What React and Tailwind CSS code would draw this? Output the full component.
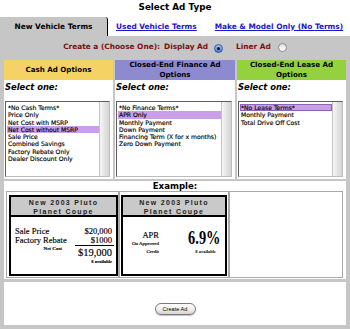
import clsx from 'clsx'

const cashItems = [
  '*No Cash Terms*',
  'Price Only',
  'Net Cost with MSRP',
  'Net Cost without MSRP',
  'Sale Price',
  'Combined Savings',
  'Factory Rebate Only',
  'Dealer Discount Only',
]
const financeItems = [
  '*No Finance Terms*',
  'APR Only',
  'Monthly Payment',
  'Down Payment',
  'Financing Term (X for x months)',
  'Zero Down Payment',
]
const leaseItems = ['*No Lease Terms*', 'Monthly Payment', 'Total Drive Off Cost']

function Radio({ checked }) {
  return checked ? (
    <span className="inline-flex h-[9px] w-[9px] items-center justify-center rounded-full border border-[#32579a] bg-gradient-to-b from-[#a9c8f0] to-[#3d7bd4]">
      <span className="h-[3px] w-[3px] rounded-full bg-[#0b1730]" />
    </span>
  ) : (
    <span className="inline-block h-[9px] w-[9px] rounded-full border border-[#8c8c8c] bg-gradient-to-b from-[#dedede] to-white" />
  )
}

function ListBox({ items, selected, focused }) {
  return (
    <div className="mt-[8px] flex h-[76px] border border-t-[#5e5e5e] border-l-[#5e5e5e] border-r-[#bdbdbd] border-b-[#bdbdbd] bg-white">
      <div className="flex-1 overflow-hidden pt-[2px] pl-[1px]">
        {items.map((it, i) => (
          <div
            key={it}
            className={clsx(
              'h-[7.3px] whitespace-nowrap pl-[1px] text-[6.1px] leading-[7.3px] [-webkit-text-stroke:0.15px_black]',
              i === selected && 'bg-[#c99fe7]',
              i === selected && focused && 'outline outline-1 -outline-offset-1 outline-[#8e62b8]'
            )}
          >
            {it}
          </div>
        ))}
      </div>
      <div className="w-[10px] border-l border-[#c4c4c4] bg-gradient-to-r from-[#f6f6f6] to-[#d4d4d4]" />
    </div>
  )
}

function Column({ title, color, width, items, selected, focused }) {
  return (
    <div className={clsx('flex flex-col', width)}>
      <div className={clsx('flex h-[20px] items-center justify-center text-center text-[7.1px] font-bold leading-[10px]', color)}>
        {title}
      </div>
      <div className="flex-1 bg-white pt-[2px] pr-[3px] pl-[1px]">
        <div className="text-[8.4px] font-bold italic leading-[11px]">Select one:</div>
        <ListBox items={items} selected={selected} focused={focused} />
      </div>
    </div>
  )
}

function CarBox({ children }) {
  return (
    <div className="flex h-[81px] flex-col border-2 border-black bg-white">
      <div className="h-[20px] border-b-2 border-black bg-[#c9c9c9] pt-[1px] text-center font-['Liberation_Sans',sans-serif] text-[7px] font-bold leading-[9px] tracking-[1.3px] text-[#222]">
        New 2003 Pluto
        <br />
        Planet Coupe
      </div>
      <div className="flex-1 font-['Liberation_Serif',serif]">{children}</div>
    </div>
  )
}

export default function App() {
  return (
    <div className="h-[329px] w-[350px] overflow-hidden bg-white font-['DejaVu_Sans',sans-serif] text-black">
      <div className="h-[17px] pt-[2px] text-center text-[8.8px] font-bold leading-[10px]">Select Ad Type</div>

      {/* Tabs */}
      <div className="flex h-[19px] items-center">
        <div className="flex h-full w-[108px] items-center justify-center rounded-tr-[3px] border-r-[1.5px] border-black bg-[#c6c6c6] text-[7.4px] font-bold">
          New Vehicle Terms
        </div>
        <a className="ml-[8px] text-[7.4px] font-bold text-[#1818c8] underline">Used Vehicle Terms</a>
        <a className="ml-[18px] text-[7.4px] font-bold text-[#1818c8] underline">Make &amp; Model Only (No Terms)</a>
      </div>

      <div className="flex h-[293px] flex-col bg-[#c6c6c6] px-[4px] pb-[4px]">
        <div className="flex h-[24px] items-start justify-center pt-[6px] text-[7.4px] font-bold leading-[10px] text-[#7d0e0e]">
          <span>Create a (Choose One):</span>
          <span className="ml-[4px]">Display Ad</span>
          <span className="ml-[6px] mt-[0.5px]">
            <Radio checked />
          </span>
          <span className="ml-[13px]">Liner Ad</span>
          <span className="ml-[7px] mt-[0.5px]">
            <Radio />
          </span>
        </div>

        <div className="flex h-[119px] gap-[2px]">
          <Column title="Cash Ad Options" color="bg-[#f4d264]" width="w-[109px]" items={cashItems} selected={3} />
          <Column
            title={
              <>
                Closed-End Finance Ad
                <br />
                Options
              </>
            }
            color="bg-[#8e8ad0]"
            width="w-[120px]"
            items={financeItems}
            selected={1}
          />
          <Column
            title={
              <>
                Closed-End Lease Ad
                <br />
                Options
              </>
            }
            color="bg-[#93d23e]"
            width="flex-1"
            items={leaseItems}
            selected={0}
            focused
          />
        </div>

        {/* Example */}
        <div className="mt-[2px] flex h-[98px] flex-col bg-white">
          <div className="h-[10px] pt-[1px] text-center text-[8.6px] font-bold leading-[9px]">Example:</div>
          <div className="flex flex-1 pl-[2px] pr-[3px] pb-[1px]">
            <div className="w-[113px] border border-[#a9a9a9] pt-[3px] pl-[2px]">
              <CarBox>
                <div className="px-[2px] pt-[10px] text-[8.5px] [-webkit-text-stroke:0.15px_black]">
                  <div className="flex justify-between px-[2px] leading-[9px]">
                    <span>Sale Price</span>
                    <span>$20,000</span>
                  </div>
                  <div className="flex justify-between px-[2px] leading-[9px]">
                    <span>Factory Rebate</span>
                    <span>$1000</span>
                  </div>
                  <div className="flex">
                    <div className="flex-1 pt-[1px] pr-[13px] text-right text-[5px] font-bold leading-[6px]">Net Cost</div>
                    <div className="w-[39px] border-t border-black pr-[2px] text-right">
                      <div className="text-[10.5px] leading-[13px]">$19,000</div>
                      <div className="text-[4.5px] font-bold leading-[6px]">8 available</div>
                    </div>
                  </div>
                </div>
              </CarBox>
            </div>
            <div className="w-[110px] border border-[#a9a9a9] pt-[3px] pl-[1px] pr-[1px]">
              <CarBox>
                <div className="flex pr-[5px]">
                  <div className="w-[36px] pt-[14px] text-right [-webkit-text-stroke:0.15px_black]">
                    <div className="text-[8.5px] leading-[9px]">APR</div>
                    <div className="text-[5px] leading-[8px]">On Approved</div>
                    <div className="text-[5px] leading-[8px]">Credit</div>
                  </div>
                  <div className="flex flex-1 flex-col items-end pt-[13px]">
                    <div className="origin-right scale-x-[0.8] text-[18px] font-bold leading-[17px]">6.9%</div>
                    <div className="mt-[2px] pr-[4px] text-[4.5px] font-bold leading-[6px]">8 available</div>
                  </div>
                </div>
              </CarBox>
            </div>
            <div className="flex-1 border border-[#a9a9a9]" />
          </div>
        </div>

        {/* Submit */}
        <div className="mt-[3px] flex flex-1 items-start justify-center bg-white pt-[21px]">
          <button className="h-[12px] w-[41px] rounded-full border border-[#7a7a7a] bg-gradient-to-b from-white via-[#f1f1f1] to-[#d3d3d3] font-['Liberation_Sans',sans-serif] text-[5.6px] leading-[10px] shadow-[0_1px_1px_rgba(0,0,0,0.25)]">
            Create Ad
          </button>
        </div>
      </div>
    </div>
  )
}
